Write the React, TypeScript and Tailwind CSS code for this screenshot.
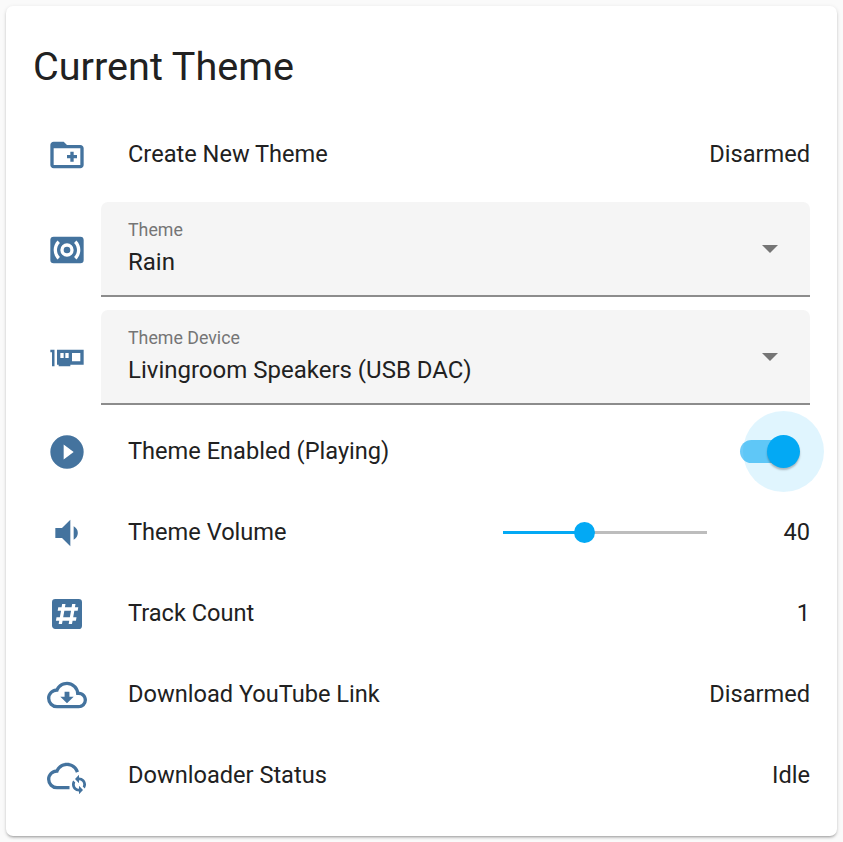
const paths = {
  folderPlus:
    "M12 12H14V10H16V12H18V14H16V16H14V14H12V12M22 8V18C22 19.11 21.11 20 20 20H4C2.89 20 2 19.11 2 18V6C2 4.89 2.89 4 4 4H10L12 6H20C21.11 6 22 6.89 22 8M20 8H4V18H20V8Z",
  surround:
    "M20,4H4A2,2 0 0,0 2,6V18A2,2 0 0,0 4,20H20A2,2 0 0,0 22,18V6A2,2 0 0,0 20,4M7.76,16.24L6.35,17.65C4.78,16.1 4,14.05 4,12C4,9.95 4.78,7.9 6.34,6.34L7.75,7.75C6.59,8.93 6,10.46 6,12C6,13.54 6.59,15.07 7.76,16.24M12,16A4,4 0 0,1 8,12A4,4 0 0,1 12,8A4,4 0 0,1 16,12A4,4 0 0,1 12,16M17.66,17.66L16.25,16.25C17.41,15.07 18,13.54 18,12C18,10.46 17.41,8.93 16.24,7.76L17.65,6.35C19.22,7.9 20,9.95 20,12C20,14.05 19.22,16.1 17.66,17.66M12,10A2,2 0 0,0 10,12A2,2 0 0,0 12,14A2,2 0 0,0 14,12A2,2 0 0,0 12,10Z",
  card: "M2 7H4.5V17H3V8.5H2M22 7V16H14V17H7V16H6V7M10 9H8V12H10M13 9H11V12H13M20 9H15V14H20V9Z",
  play: "M12,2A10,10 0 0,0 2,12A10,10 0 0,0 12,22A10,10 0 0,0 22,12A10,10 0 0,0 12,2M10,16.5V7.5L16,12L10,16.5Z",
  volume: "M5,9V15H9L14,20V4L9,9M18.5,12C18.5,10.23 17.5,8.71 16,7.97V16C17.5,15.29 18.5,13.76 18.5,12Z",
  pound:
    "M3,5A2,2 0 0,1 5,3H19A2,2 0 0,1 21,5V19A2,2 0 0,1 19,21H5C3.89,21 3,20.1 3,19V5M7,18H9L9.35,16H13.35L13,18H15L15.35,16H17.35L17.71,14H15.71L16.41,10H18.41L18.76,8H16.76L17.1,6H15.1L14.76,8H10.76L11.1,6H9.1L8.76,8H6.76L6.41,10H8.41L7.71,14H5.71L5.35,16H7.35L7,18M10.41,10H14.41L13.71,14H9.71L10.41,10Z",
  cloudDownload:
    "M19.35,10.03C18.67,6.59 15.65,4 12,4C9.11,4 6.6,5.64 5.35,8.03C2.34,8.36 0,10.9 0,14A6,6 0 0,0 6,20H19A5,5 0 0,0 24,15C24,12.36 21.95,10.22 19.35,10.03M19,18H6A4,4 0 0,1 2,14A4,4 0 0,1 6,10H6.71C7.37,7.69 9.5,6 12,6A5.5,5.5 0 0,1 17.5,11.5V12H19A3,3 0 0,1 22,15C22,16.65 20.65,18 19,18M8,13H10.55V10H13.45V13H16L12,17L8,13Z",
  cloudSync:
    "M13.5 20H6A6,6 0 0,1 0,14C0,10.9 2.34,8.36 5.35,8.03C6.6,5.64 9.11,4 12,4C15.4,4 18.27,6.25 19.2,9.35L17.3,10C16.65,7.68 14.5,6 12,6C9.5,6 7.37,7.69 6.71,10H6A4,4 0 0,0 2,14A4,4 0 0,0 6,18H13.5V20M19.2 11.3V12.9C21.5 12.9 23.4 14.8 23.4 17.1C23.4 18 23.1 18.8 22.65 19.45L21.45 18.25C21.6 17.85 21.75 17.5 21.75 17.1C21.75 15.65 20.65 14.55 19.2 14.55V16.3L16.8 13.8L19.2 11.3M19.2 22.9V21.3C16.9 21.3 15 19.4 15 17.1C15 16.2 15.3 15.4 15.75 14.75L16.95 15.95C16.8 16.35 16.65 16.7 16.65 17.1C16.65 18.55 17.75 19.65 19.2 19.65V17.9L21.6 20.4L19.2 22.9Z",
};

function Icon({ d }: { d: string }) {
  return (
    <div className="flex w-[68px] shrink-0 justify-center">
      <svg viewBox="0 0 24 24" className="h-10 w-10 fill-[#44739e]">
        <path d={d} />
      </svg>
    </div>
  );
}

function Row({ icon, label, children }: { icon: string; label: string; children: React.ReactNode }) {
  return (
    <div className="flex h-[81px] items-center">
      <Icon d={icon} />
      <div className="ml-[27px] flex-1 whitespace-nowrap">{label}</div>
      {children}
    </div>
  );
}

function SelectRow({ icon, label, value }: { icon: string; label: string; value: string }) {
  return (
    <div className="flex items-center">
      <Icon d={icon} />
      <div className="relative flex h-[95px] flex-1 items-center justify-between rounded-t-[7px] border-b-2 border-[#8c8c8c] bg-[#f5f5f5] pl-[27px] pr-[32px]">
        <div className="mt-[1px]">
          <div className="text-[17.8px] leading-[20px] text-[#757575]">{label}</div>
          <div className="mt-[6px] text-[24px] leading-[32px]">{value}</div>
        </div>
        <div className="h-0 w-0 border-x-[8.5px] border-t-[8.5px] border-x-transparent border-t-[#757575]" />
      </div>
    </div>
  );
}

export default function App() {
  return (
    <div className="min-h-[842px] bg-[#fafafa] p-[6px] font-['Roboto',sans-serif] text-[23.6px] text-[#212121]">
      <div className="h-[830px] rounded-[7px] bg-white px-[27px] shadow-[0_2px_3px_-1px_rgba(0,0,0,0.35),0_1px_4px_0_rgba(0,0,0,0.1)]">
        <h1 className="h-[108px] pt-[32px] text-[39.6px] leading-[58px]">Current Theme</h1>
        <Row icon={paths.folderPlus} label="Create New Theme">
          <span>Disarmed</span>
        </Row>
        <div className="mt-[7px] flex flex-col gap-[13px]">
          <SelectRow icon={paths.surround} label="Theme" value="Rain" />
          <SelectRow icon={paths.card} label="Theme Device" value="Livingroom Speakers (USB DAC)" />
        </div>
        <div className="mt-[6px]">
          <Row icon={paths.play} label="Theme Enabled (Playing)">
            <div className="relative mr-[17px] h-[23px] w-[53px] rounded-full bg-[#6dcbf8]">
              <div className="absolute left-[3px] top-[-29px] h-[81px] w-[81px] rounded-full bg-[#03a9f4]/12" />
              <div className="absolute left-[27px] top-[-5px] h-[33px] w-[33px] rounded-full bg-[#03a9f4] shadow-[0_2px_2px_rgba(0,0,0,0.25)]" />
            </div>
          </Row>
          <Row icon={paths.volume} label="Theme Volume">
            <div className="relative h-[3px] w-[204px] bg-[#bdbdbd]">
              <div className="h-full w-[82px] bg-[#03a9f4]" />
              <div className="absolute left-[71px] top-[-9px] h-[21px] w-[21px] rounded-full bg-[#03a9f4]" />
            </div>
            <span className="w-[103px] text-right">40</span>
          </Row>
          <Row icon={paths.pound} label="Track Count">
            <span>1</span>
          </Row>
          <Row icon={paths.cloudDownload} label="Download YouTube Link">
            <span>Disarmed</span>
          </Row>
          <Row icon={paths.cloudSync} label="Downloader Status">
            <span>Idle</span>
          </Row>
        </div>
      </div>
    </div>
  );
}
